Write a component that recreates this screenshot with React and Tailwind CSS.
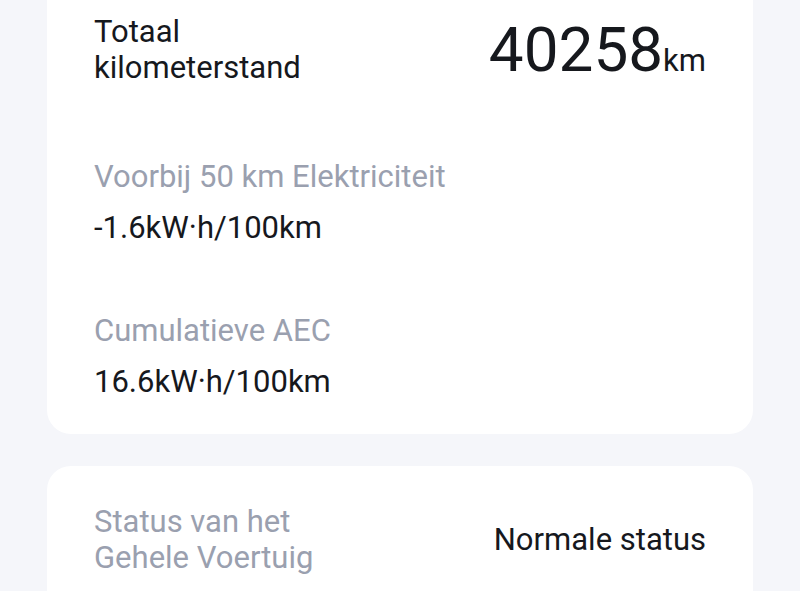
import React from 'react';

const rows = [
    { label: 'Voorbij 50 km Elektriciteit', value: '-1.6kW·h/100km' },
    { label: 'Cumulatieve AEC', value: '16.6kW·h/100km' },
];

const App = () => {
    return (
        <div className="w-[800px] h-[591px] overflow-hidden bg-[#f5f6fa] px-[47px]" style={{ fontFamily: 'Roboto, "Noto Sans", sans-serif' }}>
            {/* Mileage card */}
            <div className="bg-white rounded-b-[24px] px-[47px] pt-[14px] pb-[34px]">
                <div className="flex items-center justify-between">
                    <div className="text-[31px] leading-[36px] text-[#16181d]">
                        Totaal<br />kilometerstand
                    </div>
                    <div className="flex items-baseline text-[#16181d]">
                        <span className="text-[62px] leading-[62px]">40258</span>
                        <span className="text-[31px] leading-[36px]">km</span>
                    </div>
                </div>

                {rows.map((row, i) => (
                    <div key={row.label} className={i === 0 ? 'mt-[73px]' : 'mt-[67px]'}>
                        <div className="text-[31px] leading-[36px] text-[#9aa0af]">{row.label}</div>
                        <div className="mt-[15px] text-[31px] leading-[36px] text-[#16181d]">{row.value}</div>
                    </div>
                ))}
            </div>

            {/* Status card */}
            <div className="mt-[32px] bg-white rounded-t-[24px] px-[47px] pt-[38px] pb-[30px]">
                <div className="flex items-center justify-between">
                    <div className="text-[31px] leading-[36px] text-[#9aa0af]">
                        Status van het<br />Gehele Voertuig
                    </div>
                    <div className="text-[31px] leading-[36px] text-[#16181d]">Normale status</div>
                </div>
            </div>
        </div>
    );
};

export default App;
